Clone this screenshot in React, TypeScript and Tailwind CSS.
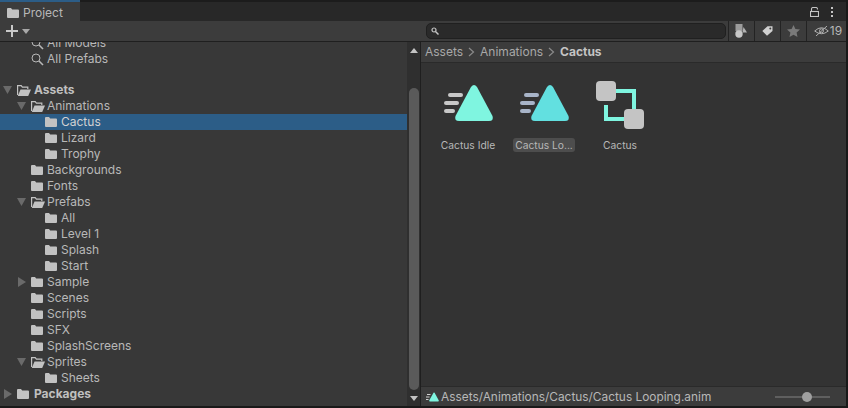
import { ReactNode } from 'react';
import { clsx } from 'clsx';

// tree rows, depth is the indent level
type Row = {
  label: string;
  depth: number;
  arrow?: 'open' | 'closed';
  open?: boolean;
  bold?: boolean;
  selected?: boolean;
};

const rows: Row[] = [
  { label: 'Assets', depth: 0, arrow: 'open', open: true, bold: true },
  { label: 'Animations', depth: 1, arrow: 'open', open: true },
  { label: 'Cactus', depth: 2, selected: true },
  { label: 'Lizard', depth: 2 },
  { label: 'Trophy', depth: 2 },
  { label: 'Backgrounds', depth: 1 },
  { label: 'Fonts', depth: 1 },
  { label: 'Prefabs', depth: 1, arrow: 'open', open: true },
  { label: 'All', depth: 2 },
  { label: 'Level 1', depth: 2 },
  { label: 'Splash', depth: 2 },
  { label: 'Start', depth: 2 },
  { label: 'Sample', depth: 1, arrow: 'closed' },
  { label: 'Scenes', depth: 1 },
  { label: 'Scripts', depth: 1 },
  { label: 'SFX', depth: 1 },
  { label: 'SplashScreens', depth: 1 },
  { label: 'Sprites', depth: 1, arrow: 'open', open: true },
  { label: 'Sheets', depth: 2 },
  { label: 'Packages', depth: 0, arrow: 'closed', bold: true },
];

const Folder = ({ open }: { open?: boolean }) =>
  open ? (
    <svg width="14" height="11" viewBox="0 0 14 11" className="shrink-0">
      <path d="M0.6 10V0.6h3.6l1.2 1.5h5.4v2" fill="none" stroke="#c2c2c2" strokeWidth="1.2" />
      <path d="M3.5 4.4H14L11.2 11H0.8z" fill="#c2c2c2" />
    </svg>
  ) : (
    <svg width="12" height="10" viewBox="0 0 12 10" className="shrink-0">
      <path d="M0 1a1 1 0 0 1 1-1h3l1.2 1.5H11a1 1 0 0 1 1 1V9a1 1 0 0 1-1 1H1a1 1 0 0 1-1-1z" fill="#c2c2c2" />
    </svg>
  );

const Magnifier = () => (
  <svg width="13" height="13" viewBox="0 0 13 13" className="shrink-0" fill="none" stroke="#b8b8b8">
    <circle cx="5" cy="5" r="4" strokeWidth="1" />
    <path d="M8 8l4 4" strokeWidth="1.6" />
  </svg>
);

const TreeRow = ({ row }: { row: Row }) => (
  <div
    className={clsx(
      'relative h-4 shrink-0 flex items-center whitespace-nowrap',
      row.selected && 'bg-[#2c5d87]'
    )}
  >
    <div className={clsx(row.depth === 0 && 'w-[3px]', row.depth === 1 && 'w-[17px]', row.depth === 2 && 'w-[31px]', 'shrink-0')} />
    <div className="w-[14px] shrink-0 flex items-center">
      {row.arrow === 'open' && (
        <svg width="10" height="8" viewBox="0 0 10 8">
          <path d="M0 0h9L4.5 8z" fill="#6a6a6a" />
        </svg>
      )}
      {row.arrow === 'closed' && (
        <svg width="9" height="10" viewBox="0 0 9 10">
          <path d="M1 0l8 5-8 5z" fill="#6a6a6a" />
        </svg>
      )}
    </div>
    <div className="w-4 shrink-0 flex items-center">
      <Folder open={row.open} />
    </div>
    <span className={clsx('text-[12px]', row.bold ? 'font-bold text-[#c0c0c0] ml-[1px]' : 'text-[#b8b8b8]', row.selected && 'text-[#d2d2d2]')}>
      {row.label}
    </span>
  </div>
);

const AnimIcon = ({ lines, fill }: { lines: string; fill: string }) => (
  <svg width="64" height="50" viewBox="0 0 64 50">
    <rect x="12" y="12" width="15" height="4" rx="2" fill={lines} />
    <rect x="8" y="20" width="15" height="4" rx="2" fill={lines} />
    <rect x="8" y="28" width="11" height="4" rx="2" fill={lines} />
    <path d="M41 6 L56.5 35 Q58 40 53 40 L23 40 Q18 40 19.5 35 L35 6 Q38 2 41 6z" fill={fill} />
  </svg>
);

const ControllerIcon = () => (
  <svg width="64" height="50" viewBox="0 0 64 50">
    <path d="M28 10h18v18" fill="none" stroke="#7ff5e0" strokeWidth="4" />
    <path d="M18 24v14h18" fill="none" stroke="#7ff5e0" strokeWidth="4" />
    <rect x="8" y="0" width="20" height="20" rx="4" fill="#c4c4c4" />
    <rect x="36" y="28" width="20" height="20" rx="4" fill="#c4c4c4" />
  </svg>
);

const ToolButton = ({ children, className }: { children: ReactNode; className?: string }) => (
  <div className={clsx('h-[20px] flex items-center justify-center border-l border-[#232323]', className)}>{children}</div>
);

const Chevron = () => (
  <svg width="7" height="10" viewBox="0 0 7 10" fill="none" stroke="#8a8a8a" strokeWidth="1.2" className="mx-[5px]">
    <path d="M1 1l4.5 4L1 9" />
  </svg>
);

const AssetTile = ({ label, selected, children }: { label: string; selected?: boolean; children: ReactNode }) => (
  <div className="w-[64px] flex flex-col items-center">
    <div className="h-[50px]">{children}</div>
    <div
      className={clsx(
        'mt-[7px] h-[14px] pt-[1px] flex items-center justify-center rounded-[3px] px-[2px] text-[10.25px] text-[#b8b8b8] whitespace-nowrap',
        selected && 'bg-[#4d4d4d]'
      )}
    >
      {label}
    </div>
  </div>
);

export default function App() {
  return (
    <div className="w-[848px] h-[408px] bg-[#191919] overflow-hidden font-['Inter',sans-serif] flex">
      <div className="w-[846px] shrink-0 flex flex-col">
        {/* tab bar */}
        <div className="h-[21px] shrink-0 bg-[#282828] flex items-stretch border-t-2 border-[#1c1c1c]">
          <div className="relative w-[80px] bg-[#3c3c3c] flex items-center gap-[4px] pl-[7px] pt-[2px]">
            <div className="absolute -top-[2px] left-0 right-0 h-[2px] bg-[#2c5d87]" />
            <svg width="12" height="10" viewBox="0 0 12 10">
              <path d="M0 1a1 1 0 0 1 1-1h3l1.2 1.5H11a1 1 0 0 1 1 1V9a1 1 0 0 1-1 1H1a1 1 0 0 1-1-1z" fill="#c2c2c2" />
            </svg>
            <span className="text-[12px] text-[#b8b8b8]">Project</span>
          </div>
          <div className="flex-1 flex items-center justify-end pr-[13px]">
            <svg width="9" height="10" viewBox="0 0 9 10" fill="none" stroke="#c4c4c4" strokeWidth="1.1">
              <rect x="0.5" y="4.5" width="8" height="5" />
              <path d="M1.5 4V2a1.5 1.5 0 0 1 1.5-1.5h3A1.5 1.5 0 0 1 7.5 2v0.5" />
            </svg>
            <div className="ml-[12px] w-[2px] flex flex-col gap-[2px]">
              <div className="h-[2px] bg-[#c4c4c4]" />
              <div className="h-[2px] bg-[#c4c4c4]" />
              <div className="h-[2px] bg-[#c4c4c4]" />
            </div>
          </div>
        </div>

        {/* toolbar */}
        <div className="h-[21px] shrink-0 bg-[#3c3c3c] border-b border-[#1f1f1f] flex items-center">
          <div className="flex items-center pl-[6px] gap-[4px] w-[426px] shrink-0">
            <svg width="12" height="12" viewBox="0 0 12 12">
              <path d="M6 0v12M0 6h12" stroke="#c8c8c8" strokeWidth="2" />
            </svg>
            <svg width="8" height="5" viewBox="0 0 8 5">
              <path d="M0 0h8L4 5z" fill="#a8a8a8" />
            </svg>
          </div>
          <div className="w-[300px] h-4 rounded-[5px] bg-[#2a2a2a] border border-[#202020] flex items-center pl-[4px] shrink-0">
            <svg width="8" height="8" viewBox="0 0 8 8" fill="none" stroke="#c4c4c4">
              <circle cx="3" cy="3" r="2" strokeWidth="1.2" />
              <path d="M4.5 4.5L7.5 7.5" strokeWidth="1.5" />
            </svg>
          </div>
          <div className="w-[2px] shrink-0" />
          <ToolButton className="w-[26px] shrink-0">
            <svg width="13" height="14" viewBox="0 0 13 14">
              <rect x="0.5" y="0" width="7" height="7" fill="#9c9c9c" />
              <circle cx="4" cy="10" r="3.7" fill="#c8c8c8" />
              <path d="M8.5 3l3.5 5.5H7.5z" fill="#b4b4b4" />
            </svg>
          </ToolButton>
          <ToolButton className="w-[26px] shrink-0">
            <svg width="11" height="10" viewBox="0 0 11 10" fill="#d0d0d0">
              <path d="M5.5 0.3H10.5V5L5 9.8 0.3 5zM8.3 1.6a1 1 0 1 0 0 2 1 1 0 0 0 0-2z" fillRule="evenodd" />
            </svg>
          </ToolButton>
          <ToolButton className="w-[26px] shrink-0">
            <svg width="13" height="12" viewBox="0 0 13 12" fill="#7a7a7a">
              <path d="M6.5 0l1.9 4.1 4.6.5-3.4 3 .9 4.4-4-2.3-4 2.3.9-4.4L0 4.6l4.6-.5z" />
            </svg>
          </ToolButton>
          <ToolButton className="flex-1 gap-[1px] pl-[3px]">
            <svg width="15" height="10" viewBox="0 0 15 10" fill="none" stroke="#b0b0b0" strokeWidth="1">
              <path d="M0.7 5Q7.5 -1.5 14.3 5Q7.5 10.5 0.7 5z" />
              <circle cx="7.5" cy="4.8" r="2" />
              <path d="M2 10L13 0" />
            </svg>
            <span className="text-[12px] text-[#b8b8b8]">19</span>
          </ToolButton>
        </div>

        {/* body */}
        <div className="flex-1 min-h-0 flex">
          {/* tree */}
          <div className="w-[407px] shrink-0 bg-[#383838] overflow-hidden flex flex-col">
            <div className="-mt-[7px] h-4 shrink-0 flex items-center pl-[31px] gap-[3px]">
              <Magnifier />
              <span className="text-[12px] text-[#b8b8b8]">All Models</span>
            </div>
            <div className="h-4 shrink-0 flex items-center pl-[31px] gap-[3px]">
              <Magnifier />
              <span className="text-[12px] text-[#b8b8b8]">All Prefabs</span>
            </div>
            <div className="h-[15px] shrink-0" />
            {rows.map((row) => (
              <TreeRow key={row.label} row={row} />
            ))}
          </div>

          {/* scrollbar */}
          <div className="w-[13px] shrink-0 bg-[#2f2f2f] flex flex-col items-center pt-[6px] pb-[5px]">
            <svg width="8" height="5" viewBox="0 0 8 5">
              <path d="M0 5h8L4 0z" fill="#c4c4c4" />
            </svg>
            <div className="mt-[35px] w-[10px] flex-1 rounded-[5px] bg-[#5a5a5a]" />
            <svg width="8" height="5" viewBox="0 0 8 5" className="mt-[6px]">
              <path d="M0 0h8L4 5z" fill="#c4c4c4" />
            </svg>
          </div>

          {/* assets */}
          <div className="flex-1 min-w-0 flex flex-col border-l border-[#1f1f1f] bg-[#333333]">
            <div className="h-[21px] shrink-0 bg-[#3c3c3c] border-b border-[#2a2a2a] flex items-center pl-[4px] text-[12px] text-[#a8a8a8]">
              <span>Assets</span>
              <Chevron />
              <span>Animations</span>
              <Chevron />
              <span className="font-bold text-[#c4c4c4]">Cactus</span>
            </div>
            <div className="flex-1 min-h-0 flex gap-[12px] pl-[15px] pt-[18px]">
              <AssetTile label="Cactus Idle">
                <AnimIcon lines="#c8c8c8" fill="#7ff5e0" />
              </AssetTile>
              <AssetTile label="Cactus Lo..." selected>
                <AnimIcon lines="#a8b4c8" fill="#62e0e0" />
              </AssetTile>
              <AssetTile label="Cactus">
                <ControllerIcon />
              </AssetTile>
            </div>
            <div className="h-[20px] shrink-0 bg-[#3c3c3c] border-t border-[#2a2a2a] flex items-center pl-[5px] pr-[16px]">
              <svg width="13" height="10" viewBox="0 0 13 10" className="shrink-0">
                <path d="M1 2.5h3.5M0 5h3.5M0 7.5h2.5" stroke="#d0d0d0" strokeWidth="1" />
                <path d="M7.5 0.8Q8 0 8.6 0.8L12.8 8.5Q13 9.5 12 9.5H4Q3 9.5 3.2 8.5z" fill="#7ff5e0" />
              </svg>
              <span className="ml-[2px] text-[11.88px] text-[#b8b8b8]">Assets/Animations/Cactus/Cactus Looping.anim</span>
              <div className="ml-auto relative w-[55px] h-[2px] bg-[#5f5f5f]">
                <div className="absolute left-[27px] -top-[4px] w-[10px] h-[10px] rounded-full bg-[#a0a0a0]" />
              </div>
            </div>
          </div>
        </div>
        <div className="h-[2px] shrink-0" />
      </div>
    </div>
  );
}
